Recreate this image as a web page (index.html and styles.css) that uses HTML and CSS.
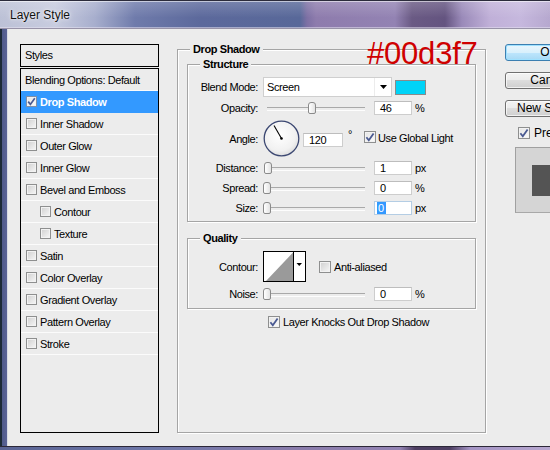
FILE: index.html
```html
<!DOCTYPE html>
<html>
<head>
<meta charset="utf-8">
<title>Layer Style</title>
<link rel="stylesheet" href="styles.css">
</head>
<body>
<div class="window">
  <div class="titlebar"><span class="title">Layer Style</span></div>
  <div class="middle">
    <div class="frame-left"></div>
    <div class="client">
      <div class="styles-panel">
        <div class="styles-head">Styles</div>
        <ul class="styles-list">
          <li class="item plain">Blending Options: Default</li>
          <li class="item selected"><span class="cb checked"><svg viewBox="0 0 11 11" width="11" height="11"><path d="M2.2 5.6 L4.4 8.4 L8.8 2.2" fill="none" stroke="#4a5a92" stroke-width="1.7"/></svg></span>Drop Shadow</li>
          <li class="item"><span class="cb"></span>Inner Shadow</li>
          <li class="item"><span class="cb"></span>Outer Glow</li>
          <li class="item"><span class="cb"></span>Inner Glow</li>
          <li class="item"><span class="cb"></span>Bevel and Emboss</li>
          <li class="item sub"><span class="cb"></span>Contour</li>
          <li class="item sub"><span class="cb"></span>Texture</li>
          <li class="item"><span class="cb"></span>Satin</li>
          <li class="item"><span class="cb"></span>Color Overlay</li>
          <li class="item"><span class="cb"></span>Gradient Overlay</li>
          <li class="item"><span class="cb"></span>Pattern Overlay</li>
          <li class="item"><span class="cb"></span>Stroke</li>
        </ul>
      </div>

      <fieldset class="group main">
        <legend>Drop Shadow</legend>
        <fieldset class="group sub-group structure">
          <legend>Structure</legend>
          <div class="row r-blend">
            <span class="lbl">Blend Mode:</span>
            <div class="select"><span class="sel-text">Screen</span><span class="sel-btn"><svg width="7" height="4" viewBox="0 0 7 4"><path d="M0 0 H7 L3.5 4 Z" fill="#000"/></svg></span></div>
            <span class="swatch"></span>
          </div>
          <div class="row r-opacity">
            <span class="lbl">Opacity:</span>
            <div class="slider"><span class="thumb" style="left:45px"></span></div>
            <span class="num">46</span>
            <span class="unit">%</span>
          </div>
          <div class="row r-angle">
            <span class="lbl">Angle:</span>
            <svg class="dial" width="37" height="37" viewBox="0 0 37 37">
              <defs>
                <radialGradient id="dg" cx="45%" cy="40%" r="65%">
                  <stop offset="0" stop-color="#ffffff"/>
                  <stop offset="0.7" stop-color="#f1f1f1"/>
                  <stop offset="1" stop-color="#d9d9d9"/>
                </radialGradient>
              </defs>
              <circle cx="18.5" cy="18.5" r="17.3" fill="url(#dg)" stroke="#3c4872" stroke-width="1.3"/>
              <line x1="18.5" y1="18.5" x2="11" y2="5.5" stroke="#000" stroke-width="1.1"/>
              <circle cx="18.5" cy="18.5" r="1.3" fill="#000"/>
            </svg>
            <span class="num angle-num">120</span>
            <span class="deg">°</span>
            <span class="cb big checked"><svg viewBox="0 0 12 12" width="12" height="12"><path d="M2.4 6.2 L4.8 9.2 L9.6 2.4" fill="none" stroke="#4a5a92" stroke-width="1.8"/></svg></span>
            <span class="cb-text">Use Global Light</span>
          </div>
          <div class="row r-dist">
            <span class="lbl">Distance:</span>
            <div class="slider"><span class="thumb" style="left:1px"></span></div>
            <span class="num">1</span>
            <span class="unit">px</span>
          </div>
          <div class="row r-spread">
            <span class="lbl">Spread:</span>
            <div class="slider"><span class="thumb" style="left:0px"></span></div>
            <span class="num">0</span>
            <span class="unit">%</span>
          </div>
          <div class="row r-size">
            <span class="lbl">Size:</span>
            <div class="slider"><span class="thumb" style="left:0px"></span></div>
            <span class="num focus"><span class="hl">0</span></span>
            <span class="unit">px</span>
          </div>
        </fieldset>

        <fieldset class="group sub-group quality">
          <legend>Quality</legend>
          <div class="row r-contour">
            <span class="lbl">Contour:</span>
            <svg class="contour" width="43" height="31" viewBox="0 0 43 31">
              <rect x="0.5" y="0.5" width="42" height="30" fill="#fff" stroke="#000"/>
              <path d="M3 30 L30 1.5 L30 30 Z" fill="#9a9a9a"/>
              <line x1="30.5" y1="0.5" x2="30.5" y2="30.5" stroke="#000"/>
              <path d="M33.5 12 H39 L36.25 15 Z" fill="#000"/>
            </svg>
            <span class="cb big"></span>
            <span class="cb-text">Anti-aliased</span>
          </div>
          <div class="row r-noise">
            <span class="lbl">Noise:</span>
            <div class="slider"><span class="thumb" style="left:0px"></span></div>
            <span class="num">0</span>
            <span class="unit">%</span>
          </div>
        </fieldset>

        <div class="row knock">
          <span class="cb big checked"><svg viewBox="0 0 12 12" width="12" height="12"><path d="M2.4 6.2 L4.8 9.2 L9.6 2.4" fill="none" stroke="#4a5a92" stroke-width="1.8"/></svg></span>
          <span class="cb-text">Layer Knocks Out Drop Shadow</span>
        </div>
      </fieldset>

      <div class="buttons">
        <div class="btn default">OK</div>
        <div class="btn">Cancel</div>
        <div class="btn">New Style...</div>
        <div class="preview-row">
          <span class="cb big checked"><svg viewBox="0 0 12 12" width="12" height="12"><path d="M2.4 6.2 L4.8 9.2 L9.6 2.4" fill="none" stroke="#4a5a92" stroke-width="1.8"/></svg></span>
          <span class="cb-text">Preview</span>
        </div>
        <div class="preview-box"><div class="preview-swatch"></div></div>
      </div>

      <div class="annot">#00d3f7</div>
    </div>
  </div>
  <div class="frame-bottom"></div>
</div>
</body>
</html>
```

FILE: styles.css
```css
* { box-sizing: border-box; }
html, body { margin: 0; padding: 0; }
body {
  width: 550px;
  height: 450px;
  overflow: hidden;
  font-family: "Liberation Sans", Arial, sans-serif;
  font-size: 11px;
  letter-spacing: -0.4px;
  color: #000;
  background: #5a6494;
}
.window {
  width: 550px;
  height: 450px;
  display: flex;
  flex-direction: column;
}

/* title bar */
.titlebar {
  height: 29px;
  flex: none;
  display: flex;
  align-items: center;
  padding-left: 10px;
  border-top: 1px solid #2b2b3b;
  background:
    linear-gradient(180deg, rgba(255,255,255,0.18), rgba(255,255,255,0) 60%),
    linear-gradient(90deg, #bcc1d6 0, #c8ccdf 55px, #a7aecd 95px, #6f7bab 135px, #5c699c 200px, #586899 300px, #7d70a4 307px, #8e7cad 316px, #9383b3 395px, #6a5a84 412px, #645480 445px, #9a8ab9 462px, #c0b0d8 490px, #c6b8de 520px, #b6a8cf 550px);
  box-shadow: inset 0 1px 0 rgba(255,255,255,0.55), inset 0 -2px 0 rgba(230,225,240,0.55), inset 0 -1px 0 #3a3450;
}
.title {
  font-family: "Liberation Sans", Arial, sans-serif;
  font-size: 12px;
  letter-spacing: 0;
  color: #111;
  text-shadow: 0 0 5px rgba(255,255,255,0.9), 0 0 2px rgba(255,255,255,0.8);
}

.middle {
  height: 417px;
  flex: none;
  display: flex;
}
.frame-left {
  width: 8px;
  flex: none;
  background: linear-gradient(90deg, #1c2a36 0, #1c2a36 2px, #4f5a8a 2px, #5a6396 7px, #d8dce6 7px, #d8dce6 8px);
}
.frame-bottom {
  height: 4px;
  flex: none;
  border-top: 1px solid #2c2838;
  background: linear-gradient(90deg, #5a6494 0, #6e77a8 150px, #8a7cab 300px, #9484b4 400px, #4e3f62 415px, #4e3f62 450px, #a494c4 470px, #b8a8d0 550px);
}

.client {
  flex: 1;
  position: relative;
  overflow: hidden;
  background: #ececec;
  display: flex;
  align-items: flex-start;
  padding: 15px 0 0 12px;
}

/* styles list */
.styles-panel {
  width: 139px;
  flex: none;
}
.styles-head {
  height: 23px;
  border: 1px solid #000;
  padding-left: 4px;
  line-height: 20px;
}
.styles-list {
  list-style: none;
  margin: 1px 0 0;
  padding: 0;
  height: 365px;
  border: 1px solid #000;
}
.item {
  height: 22px;
  border-bottom: 1px solid #fbfbfb;
  display: flex;
  align-items: center;
  padding-left: 5px;
  white-space: nowrap;
}
.item.plain { padding-left: 4px; }
.item.sub { padding-left: 19px; }
.item.selected {
  background: #3399ff;
  color: #fff;
  font-weight: bold;
  border-bottom-color: #3399ff;
}

/* checkbox */
.cb {
  width: 11px;
  height: 11px;
  flex: none;
  margin-right: 3px;
  border: 1px solid #8e8f8f;
  background: linear-gradient(135deg, #cfcfcf, #f7f7f7);
  box-shadow: inset 0 0 0 1px #f2f2f2;
  position: relative;
  display: inline-block;
}
.cb.big { width: 12px; height: 12px; }
.cb.checked { background: linear-gradient(135deg, #e4e4e4, #fbfbfb); }
.cb svg { position: absolute; left: -1px; top: -1px; }
.item.selected .cb { border-color: #7f8fa8; }

/* group boxes */
fieldset.group {
  margin: 0;
  min-width: 0;
  border: 1px solid #a5a5a5;
  box-shadow: inset 1px 1px 0 #fff, 1px 1px 0 #fff;
}
fieldset.group > legend {
  font-weight: bold;
  line-height: 12px;
  padding: 0 3px;
  background: #ececec;
}
.main {
  flex: none;
  width: 309px;
  height: 390px;
  margin-top: -1px !important;
  margin-left: 18px !important;
  padding: 0 9px;
}
.main > legend { margin-left: 3px; }
.sub-group > legend { margin-left: 12px; }
.structure {
  margin-top: 3px !important;
  padding: 7px 0 6px;
}
.quality {
  margin-top: 10px !important;
  padding: 7px 0 7px;
}

.row {
  display: flex;
  align-items: center;
  white-space: nowrap;
}
.lbl {
  width: 70px;
  flex: none;
  text-align: right;
  margin-right: 5px;
}
.r-blend { height: 20px; }
.r-opacity { height: 14px; margin-top: 4px; }
.r-angle { height: 37px; margin-top: 5px; }
.r-dist { height: 14px; margin-top: 4px; }
.r-spread, .r-size { height: 14px; margin-top: 6px; }
.r-contour { height: 31px; }
.r-noise { height: 14px; margin-top: 5px; }
.knock { height: 14px; margin-top: 6px; padding-left: 81px; }

.select {
  width: 129px;
  height: 20px;
  flex: none;
  display: flex;
  align-items: center;
  background: #fff;
  border: 1px solid #cfcfcf;
}
.sel-text { flex: 1; padding-left: 3px; }
.sel-btn {
  width: 17px;
  height: 18px;
  display: flex;
  align-items: center;
  justify-content: center;
  border-left: 1px solid #ececec;
}
.swatch {
  width: 31px;
  height: 15px;
  margin-left: 3px;
  background: #00d3f7;
  border: 1px solid #8a8a8a;
}

.slider {
  position: relative;
  width: 104px;
  height: 14px;
  flex: none;
}
.slider::before {
  content: "";
  position: absolute;
  left: 4px;
  right: 2px;
  top: 6px;
  height: 2px;
  border-top: 1px solid #a9a9a9;
  border-bottom: 1px solid #fdfdfd;
}
.thumb {
  position: absolute;
  top: 1px;
  width: 8px;
  height: 12px;
  border: 1px solid #8a8a8a;
  border-radius: 3px 3px 2px 2px;
  background: linear-gradient(90deg, #ffffff, #e3e3e3);
}
.num {
  width: 38px;
  height: 14px;
  flex: none;
  margin-left: 7px;
  background: #fff;
  border: 1px solid #cdcdcd;
  border-top-color: #bdbdbd;
  padding-left: 5px;
  line-height: 12px;
}
.num.focus { border-color: #b4cde4; padding-left: 2px; }
.hl { background: #3399ff; color: #fff; padding: 0 2px 0 1px; display: inline-block; height: 12px; }
.unit { margin-left: 3px; }
.dial { flex: none; }
.angle-num { width: 40px; margin-left: 3px; margin-top: 2px; }
.deg { margin-left: 5px; align-self: flex-start; margin-top: 9px; line-height: 10px; }
.r-angle .cb { margin-left: 12px; margin-right: 2px; margin-top: -3px; }
.r-angle .cb-text { margin-top: -1px; }
.contour { flex: none; }
.r-contour .cb { margin-left: 13px; margin-right: 3px; }
.knock .cb { margin-right: 3px; }

/* buttons */
.buttons {
  flex: none;
  width: 90px;
  margin-left: 19px;
  display: flex;
  flex-direction: column;
  align-items: flex-start;
}
.btn {
  width: 88px;
  height: 17px;
  margin-bottom: 11px;
  border: 1px solid #707070;
  border-radius: 3px;
  background: linear-gradient(180deg, #f3f3f3 0, #ebebeb 50%, #dddddd 50%, #cfcfcf 100%);
  box-shadow: inset 0 0 0 1px rgba(255,255,255,0.7);
  text-align: center;
  font-size: 12px;
  letter-spacing: 0;
  line-height: 15px;
}
.btn.default {
  border-color: #3c7fb1;
  background: linear-gradient(180deg, #eaf6fd 0, #d9f0fc 50%, #bee6fd 50%, #a7d9f5 100%);
  box-shadow: inset 0 0 0 1px #9fe1ff;
}
.preview-row {
  display: flex;
  align-items: center;
  height: 12px;
  margin-top: -1px;
  padding-left: 13px;
  font-size: 12px;
  letter-spacing: 0;
}
.preview-row .cb { margin-right: 4px; }
.preview-box {
  margin-top: 8px;
  margin-left: 10px;
  width: 80px;
  height: 66px;
  background: #d5d5d5;
  border-left: 1px solid #a0a0a0;
  border-top: 1px solid #a0a0a0;
  border-bottom: 1px solid #a8a8a8;
  padding: 17px 0 0 16px;
}
.preview-swatch {
  width: 31px;
  height: 31px;
  background: #545454;
}

/* annotation */
.annot {
  position: absolute;
  left: 359px;
  top: 9px;
  font-family: "Liberation Sans", Arial, sans-serif;
  font-size: 31px;
  line-height: 31px;
  letter-spacing: -0.2px;
  color: #cf0000;
}
```
